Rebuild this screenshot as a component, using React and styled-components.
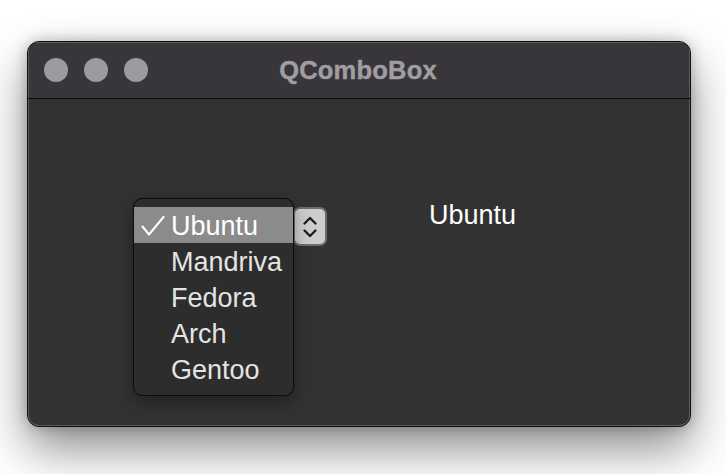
import React, { useState } from 'react'
import styled, { createGlobalStyle } from 'styled-components'

const GlobalStyle = createGlobalStyle`
  html, body {
    margin: 0;
    background: #ffffff;
    font-family: "Liberation Sans", Arial, sans-serif;
  }
  body {
    padding: 41px 0 0 27px;
    height: 474px;
    box-sizing: border-box;
    overflow: hidden;
  }
`

const Window = styled.div`
  width: 664px;
  height: 386px;
  box-sizing: border-box;
  border: 1px solid #111;
  border-radius: 12px;
  overflow: hidden;
  background: #323232;
  box-shadow: inset 0 0 0 1px #5b5b5d, 0 22px 48px rgba(0, 0, 0, 0.45), 0 0 14px rgba(0, 0, 0, 0.25);
  display: flex;
  flex-direction: column;
`

const TitleBar = styled.div`
  height: 56px;
  flex-shrink: 0;
  background: #38363b;
  border-bottom: 1px solid #0c0c0c;
  box-shadow: inset 1px 1px 0 #5b5b5d, inset -1px 0 0 #5b5b5d;
  display: flex;
  align-items: center;
  padding-left: 16px;
  position: relative;
`

const Lights = styled.div`
  display: flex;
  gap: 16px;
`

const Light = styled.span`
  width: 24px;
  height: 24px;
  border-radius: 50%;
  background: #9d9ba0;
`

const Title = styled.div`
  position: absolute;
  left: 0;
  right: 0;
  padding-right: 2px;
  text-align: center;
  font-weight: bold;
  font-size: 25.5px;
  letter-spacing: 0.2px;
  color: #a09ea3;
  -webkit-text-stroke: 0.4px #a09ea3;
`

const Body = styled.div`
  flex: 1;
  display: flex;
  align-items: flex-start;
  padding-left: 106px;
  box-shadow: inset 1px 0 0 #5b5b5d, inset -1px -1px 0 #5b5b5d;
`

const Combo = styled.div`
  position: relative;
  margin-top: 108px;
  width: 193px;
  height: 38px;
  display: flex;
  justify-content: flex-end;
`

const Stepper = styled.div`
  width: 34px;
  height: 39px;
  box-sizing: border-box;
  border: 2px solid #6c6c6c;
  border-radius: 7px;
  background: #cdcdcd;
  display: flex;
  align-items: center;
  justify-content: center;
`

const Popup = styled.div`
  position: absolute;
  left: -1px;
  top: -9px;
  width: 161px;
  box-sizing: border-box;
  padding: 8px 0 8px;
  border: 1px solid #0b0b0b;
  border-radius: 9px;
  background: #2d2d2d;
  box-shadow: 0 6px 16px rgba(0, 0, 0, 0.35);
`

const Item = styled.div`
  height: 36px;
  box-sizing: border-box;
  padding-top: 3px;
  display: flex;
  align-items: center;
  position: relative;
  padding-left: 37px;
  font-size: 27px;
  color: ${p => (p.$active ? '#ffffff' : '#e4e4e4')};
  background: ${p => (p.$active ? '#8b8b8b' : 'transparent')};
`

const Check = styled.svg`
  position: absolute;
  left: 7px;
  top: 9px;
`

const Label = styled.div`
  margin-top: 101px;
  margin-left: 102px;
  font-size: 27px;
  line-height: 30px;
  color: #ffffff;
`

const distros = ['Ubuntu', 'Mandriva', 'Fedora', 'Arch', 'Gentoo']

export default function App() {
  const [current] = useState('Ubuntu')
  return (
    <>
      <GlobalStyle />
      <Window>
        <TitleBar>
          <Lights>
            <Light />
            <Light />
            <Light />
          </Lights>
          <Title>QComboBox</Title>
        </TitleBar>
        <Body>
          <Combo>
            <Stepper>
              <svg width="16" height="26" viewBox="0 0 16 26">
                <path d="M2.5 9.5 L8 4 L13.5 9.5" fill="none" stroke="#1e1e1e" strokeWidth="2.4" strokeLinecap="round" strokeLinejoin="round" />
                <path d="M2.5 16.5 L8 22 L13.5 16.5" fill="none" stroke="#1e1e1e" strokeWidth="2.4" strokeLinecap="round" strokeLinejoin="round" />
              </svg>
            </Stepper>
            <Popup>
              {distros.map(d => (
                <Item key={d} $active={d === current}>
                  {d === current && (
                    <Check width="24" height="20" viewBox="0 0 24 20">
                      <path d="M1.5 10.5 L8 18.5 L22.5 1" fill="none" stroke="#ffffff" strokeWidth="2" strokeLinecap="round" strokeLinejoin="round" />
                    </Check>
                  )}
                  {d}
                </Item>
              ))}
            </Popup>
          </Combo>
          <Label>{current}</Label>
        </Body>
      </Window>
    </>
  )
}
